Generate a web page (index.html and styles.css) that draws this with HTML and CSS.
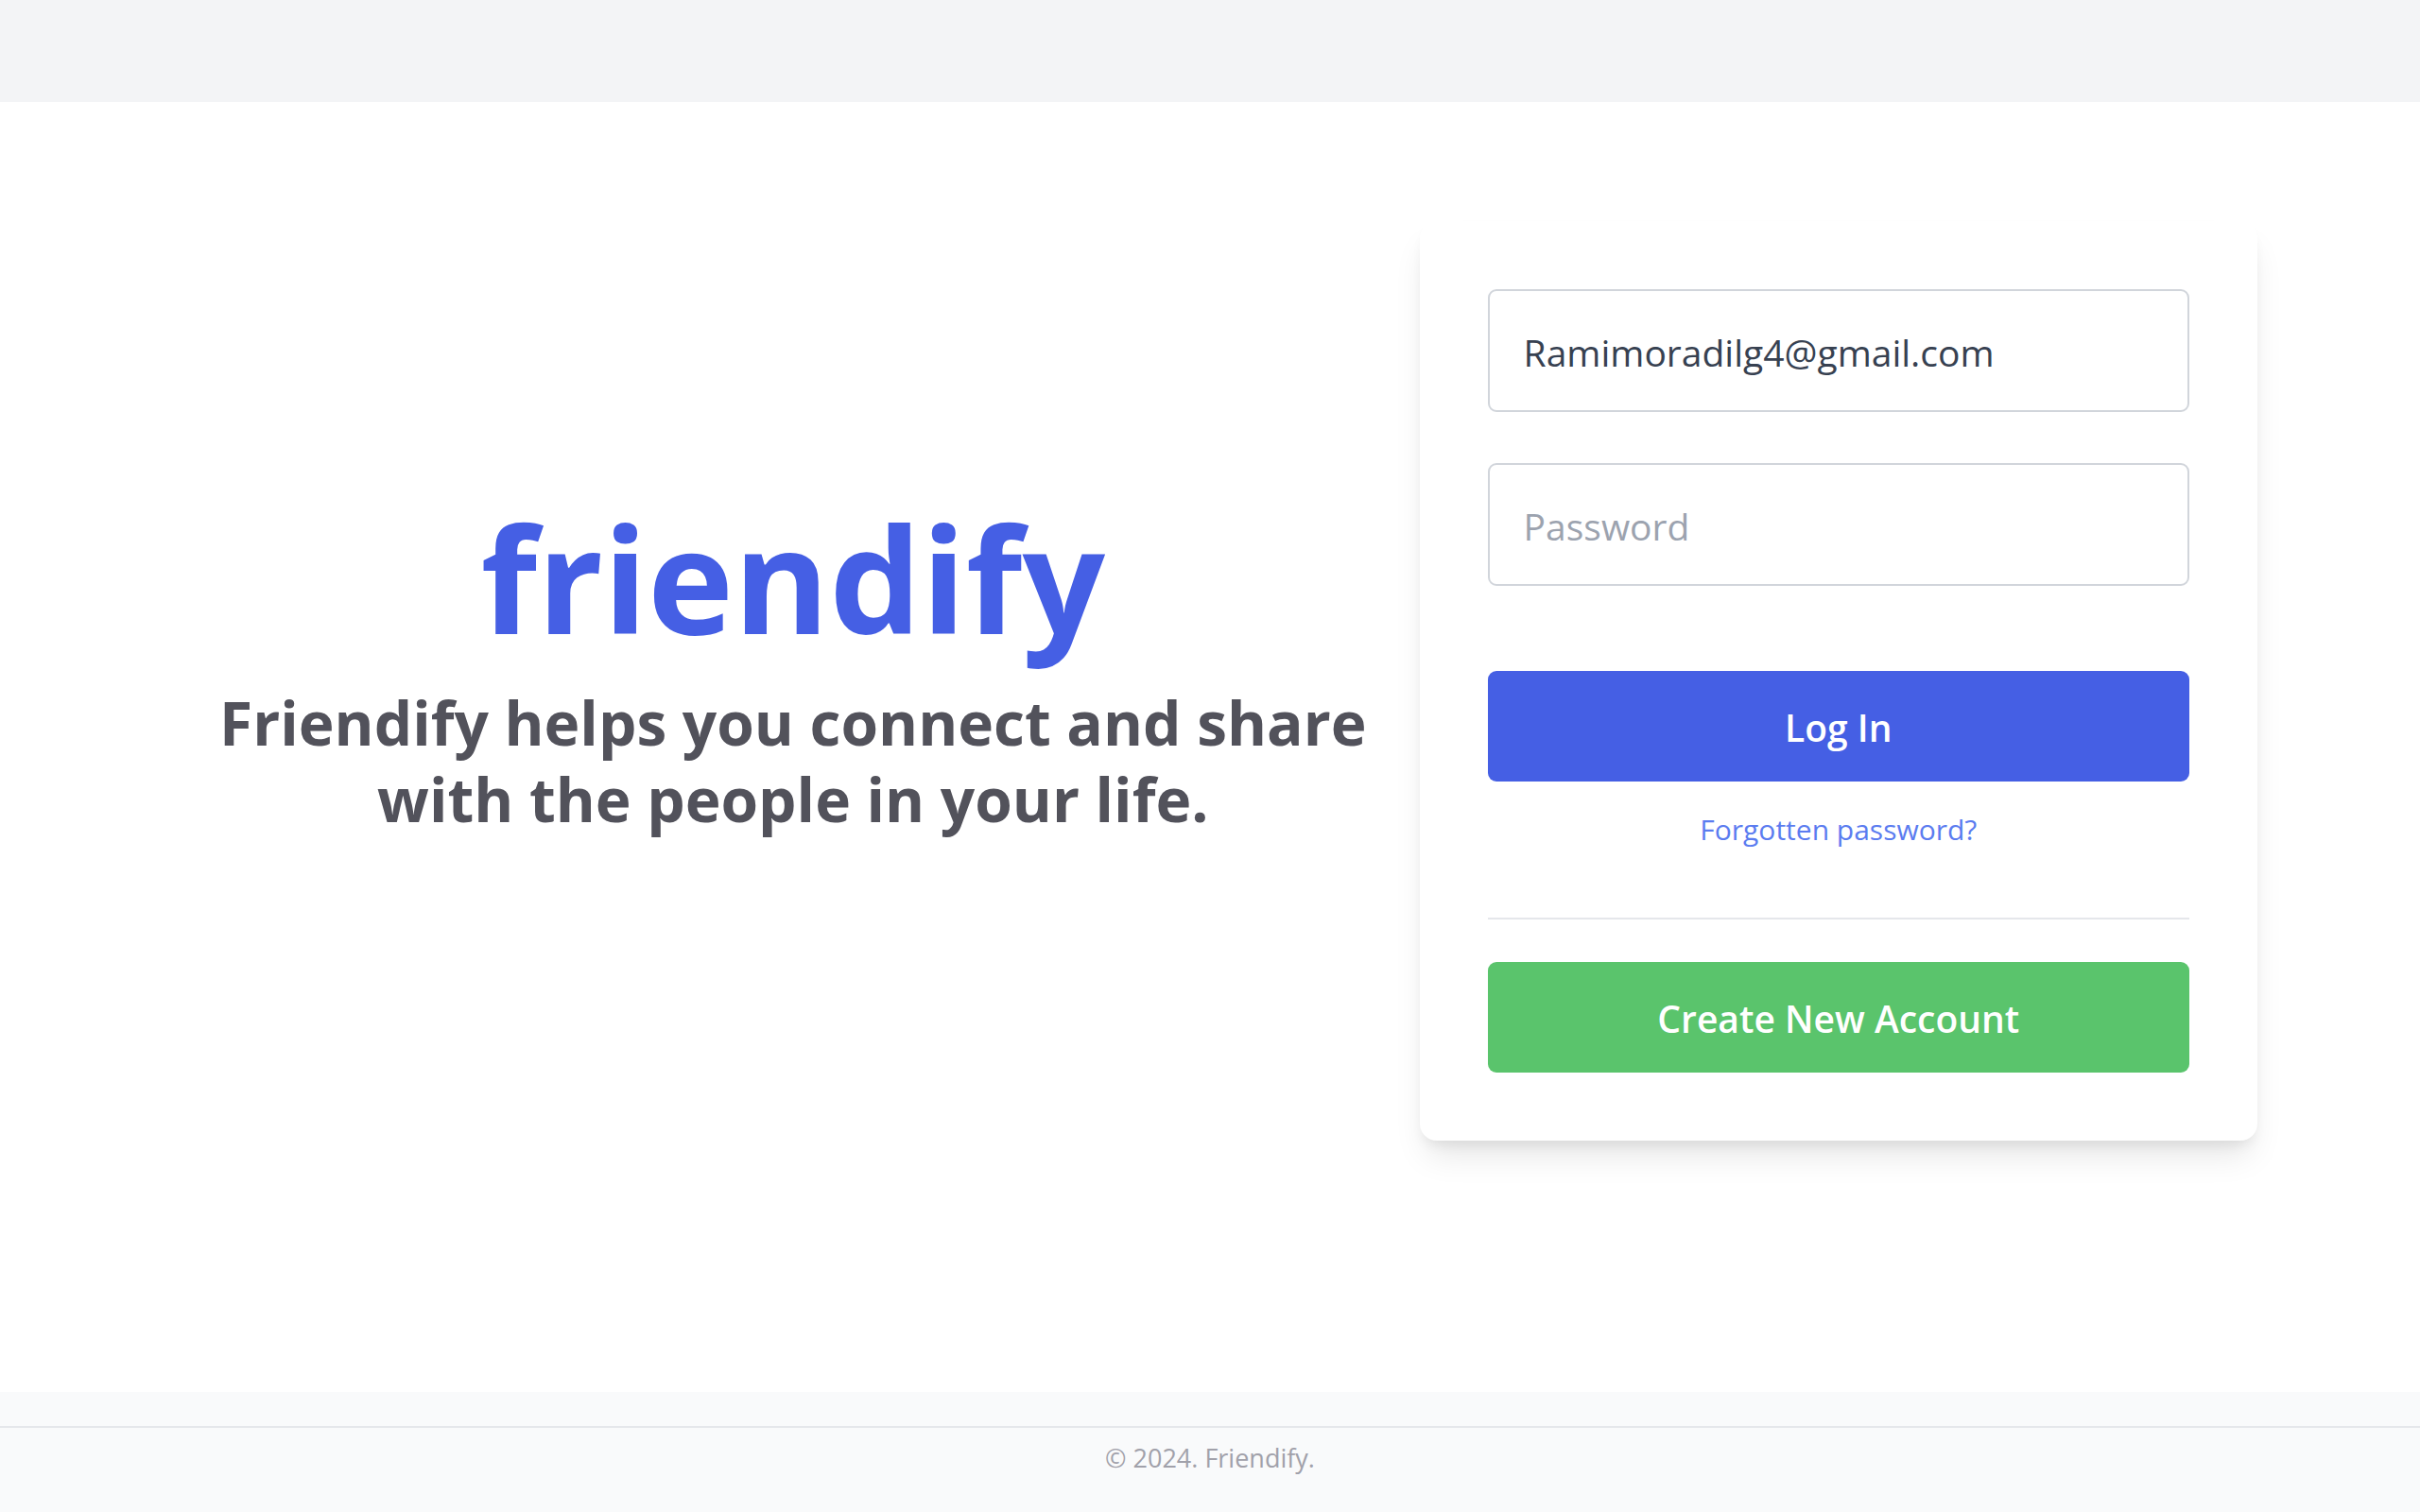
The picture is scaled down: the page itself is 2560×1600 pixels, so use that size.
FILE: index.html
```html
<!DOCTYPE html>
<html lang="en">
<head>
  <meta charset="utf-8">
  <meta name="viewport" content="width=device-width, initial-scale=1">
  <title>friendify</title>
  <link rel="stylesheet" href="styles.css">
</head>
<body>
  <header class="topbar"></header>
  <main class="main">
    <section class="intro">
      <h1 class="brand">friendify</h1>
      <p class="tagline">Friendify helps you connect and share<br>with the people in your life.</p>
    </section>
    <section class="card">
      <form class="form">
        <input class="field" type="email" value="Ramimoradilg4@gmail.com" placeholder="Email" aria-label="Email">
        <input class="field" type="password" placeholder="Password" aria-label="Password">
        <button class="button button-login" type="submit">Log In</button>
      </form>
      <a class="forgot" href="#">Forgotten password?</a>
      <hr class="divider">
      <button class="button button-create" type="button">Create New Account</button>
    </section>
  </main>
  <footer class="footer">
    <p class="copyright">© 2024. Friendify.</p>
  </footer>
</body>
</html>
```
FILE: styles.css
```css
* {
  box-sizing: border-box;
  margin: 0;
}

body {
  min-height: 100vh;
  display: flex;
  flex-direction: column;
  background: #ffffff;
  font-family: "Segoe UI", "Open Sans", "Noto Sans", sans-serif;
}

.topbar {
  height: 108px;
  background: #f3f4f6;
}

.main {
  flex: 1;
  display: grid;
  grid-template-columns: 3fr 2fr;
  align-items: start;
  padding: 126px 172px;
}

.intro {
  align-self: stretch;
  display: flex;
  flex-direction: column;
  justify-content: center;
  gap: 32px;
  max-height: 973px;
  padding: 0 0 26px 4px;
  text-align: center;
}

.brand {
  color: #455fe4;
  font-size: 154px;
  line-height: 162px;
  font-weight: 700;
}

.tagline {
  color: #52525b;
  font-size: 64px;
  line-height: 81px;
  font-weight: 700;
}

.card {
  display: flex;
  flex-direction: column;
  padding: 72px;
  border-radius: 18px;
  background: #ffffff;
  box-shadow: 0 22px 34px -7px rgba(0, 0, 0, 0.1), 0 9px 14px -5px rgba(0, 0, 0, 0.08);
}

.form {
  display: flex;
  flex-direction: column;
  gap: 54px;
}

.field {
  width: 100%;
  height: 130px;
  padding: 3px 36px 0;
  border: 2px solid #d1d5db;
  border-radius: 9px;
  background: #ffffff;
  color: #374151;
  font: 400 39px/54px "Segoe UI", "Open Sans", "Noto Sans", sans-serif;
}

.field::placeholder {
  color: #9ca3af;
  opacity: 1;
}

.button {
  height: 117px;
  padding: 3px 36px 0;
  border: 0;
  border-radius: 9px;
  color: #ffffff;
  font: 600 39px/54px "Segoe UI", "Open Sans", "Noto Sans", sans-serif;
  cursor: pointer;
}

.button-login {
  margin-top: 36px;
  background: #455fe4;
}

.button-create {
  background: #5ac46c;
}

.forgot {
  align-self: center;
  margin: 28px 0 71px;
  color: #5b7cf0;
  font-size: 30px;
  line-height: 45px;
  text-decoration: none;
}

.divider {
  width: 100%;
  height: 2px;
  margin-bottom: 45px;
  border: 0;
  background: #e5e7eb;
}

.footer {
  padding: 36px 0;
  background: #f9fafb;
}

.copyright {
  height: 55px;
  padding-top: 9px;
  border-top: 2px solid #e5e7eb;
  color: #a1a1aa;
  font-size: 27px;
  line-height: 45px;
  text-align: center;
}
```
